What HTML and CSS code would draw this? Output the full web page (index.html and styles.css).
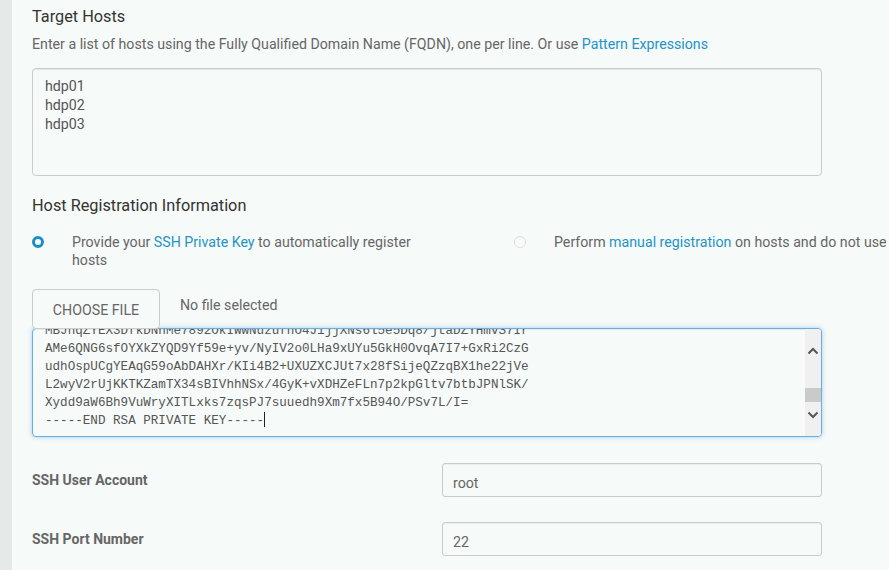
FILE: index.html
```html
<!DOCTYPE html>
<html>
<head>
<meta charset="utf-8">
<link rel="stylesheet" href="styles.css">
</head>
<body>
<div class="strip"></div>
<main class="main">
  <h2 class="title">Target Hosts</h2>
  <p class="desc">Enter a list of hosts using the Fully Qualified Domain Name (FQDN), one per line. Or use <a class="link">Pattern Expressions</a></p>
  <textarea class="hosts" readonly>hdp01
hdp02
hdp03</textarea>

  <h3 class="title title-reg">Host Registration Information</h3>
  <div class="radios">
    <div class="radio-opt">
      <span class="radio checked"></span>
      <span class="radio-text">Provide your <a class="link">SSH Private Key</a> to automatically register hosts</span>
    </div>
    <div class="radio-opt">
      <span class="radio"></span>
      <span class="radio-text nowrap">Perform <a class="link">manual registration</a> on hosts and do not use SSH</span>
    </div>
  </div>

  <div class="file-row">
    <button class="file-btn">CHOOSE FILE</button>
    <span class="file-none">No file selected</span>
  </div>

  <div class="keybox">
    <div class="keytext">
      <div class="keyinner">MBJnqZYEX3DfkDNhMe7892OkIWwNuzufhO4J1jjXNs6l5e5Dq8/jtaDZYHmvS7Ir
AMe6QNG6sfOYXkZYQD9Yf59e+yv/NyIV2o0LHa9xUYu5GkH0OvqA7I7+GxRi2CzG
udhOspUCgYEAqG59oAbDAHXr/KIi4B2+UXUZXCJUt7x28fSijeQZzqBX1he22jVe
L2wyV2rUjKKTKZamTX34sBIVhhNSx/4GyK+vXDHZeFLn7p2kpGltv7btbJPNlSK/
Xydd9aW6Bh9VuWryXITLxks7zqsPJ7suuedh9Xm7fx5B94O/PSv7L/I=
-----END RSA PRIVATE KEY-----<span class="caret"></span></div>
    </div>
    <div class="scrollbar">
      <svg class="chev" width="12" height="8" viewBox="0 0 12 8"><path d="M1.5 6.5 L6 2 L10.5 6.5" fill="none" stroke="#555" stroke-width="2"/></svg>
      <div class="thumb"></div>
      <svg class="chev chev-down" width="12" height="8" viewBox="0 0 12 8"><path d="M1.5 1.5 L6 6 L10.5 1.5" fill="none" stroke="#555" stroke-width="2"/></svg>
    </div>
  </div>

  <div class="form-row first">
    <label class="label">SSH User Account</label>
    <div class="input">root</div>
  </div>
  <div class="form-row">
    <label class="label">SSH Port Number</label>
    <div class="input">22</div>
  </div>
</main>
</body>
</html>
```

FILE: styles.css
```css
html, body {
  margin: 0;
  padding: 0;
  height: 100%;
  overflow: hidden;
}
body {
  display: flex;
  font-family: Roboto, "Liberation Sans", sans-serif;
  background: #f6faf8;
  color: #666;
}
.strip {
  width: 12px;
  flex: none;
  background: #e5e9e7;
}
.main {
  flex: 1;
  padding: 7px 0 0 20px;
  min-width: 0;
  overflow: hidden;
}
.title {
  margin: 0;
  font-size: 16.3px;
  line-height: 20px;
  font-weight: 400;
  color: #333;
}
.title-reg {
  margin-top: 20px;
}
.desc {
  margin: 7px 0 0;
  font-size: 14.2px;
  line-height: 20px;
  color: #666;
  white-space: nowrap;
}
.link {
  color: #2394c6;
  text-decoration: none;
}
.hosts {
  display: block;
  box-sizing: border-box;
  margin-top: 14px;
  width: 790px;
  height: 108px;
  padding: 8px 12px;
  border: 1px solid #ccc;
  border-radius: 4px;
  background: #f6faf8;
  box-shadow: inset 0 1px 1px rgba(0,0,0,.075);
  font-family: Roboto, "Liberation Sans", sans-serif;
  font-size: 14.2px;
  line-height: 19px;
  color: #555;
  resize: none;
  outline: none;
}
.radios {
  display: grid;
  grid-template-columns: 482px auto;
  margin-top: 17px;
}
.radio-opt {
  display: flex;
  align-items: flex-start;
  gap: 28px;
}
.radio {
  flex: none;
  box-sizing: border-box;
  width: 12px;
  height: 12px;
  margin-top: 3px;
  border-radius: 50%;
  border: 1px solid #ddd;
  background: #f9fbfa;
}
.radio.checked {
  border: 3.5px solid #1a8fc6;
  background: #fff;
}
.radio-text {
  width: 360px;
  font-size: 14.2px;
  line-height: 18px;
  color: #666;
}
.radio-text.nowrap {
  width: auto;
  white-space: nowrap;
}
.file-row {
  display: flex;
  align-items: center;
  gap: 20px;
  margin-top: 20px;
}
.file-btn {
  box-sizing: border-box;
  width: 128px;
  height: 40px;
  margin-bottom: -1px;
  padding: 2px 0 0;
  border: 1px solid #ccc;
  border-radius: 4px;
  background: #f6faf8;
  font-family: Roboto, "Liberation Sans", sans-serif;
  font-size: 14.2px;
  color: #666;
}
.file-none {
  font-size: 14.2px;
  color: #666;
  margin-top: -7px;
}
.keybox {
  display: flex;
  box-sizing: border-box;
  width: 790px;
  height: 109px;
  border: 1px solid #66afe9;
  border-radius: 4px;
  background: #f6faf8;
  box-shadow: inset 0 1px 1px rgba(0,0,0,.075), 0 0 4px rgba(102,175,233,.6);
  overflow: hidden;
}
.keytext {
  flex: 1;
  overflow: hidden;
  padding-left: 12px;
}
.keyinner {
  margin-top: -7px;
  white-space: pre;
  font-family: "Liberation Mono", "Courier New", monospace;
  font-size: 12.6px;
  line-height: 18px;
  color: #555;
}
.caret {
  display: inline-block;
  width: 0;
  height: 15px;
  border-left: 1px solid #222;
  vertical-align: -3px;
}
.scrollbar {
  flex: none;
  width: 16px;
  background: #f0f0f0;
  display: flex;
  flex-direction: column;
  align-items: center;
  padding-top: 18px;
  box-sizing: border-box;
}
.chev {
  display: block;
}
.thumb {
  width: 16px;
  height: 14px;
  margin-top: 33px;
  background: #c8cbc8;
}
.chev-down {
  margin-top: 9px;
}
.form-row {
  display: flex;
  align-items: center;
  margin-top: 25px;
}
.form-row.first {
  margin-top: 26px;
}
.label {
  width: 410px;
  font-size: 14px;
  font-weight: 700;
  color: #666;
}
.input {
  box-sizing: border-box;
  width: 380px;
  height: 34px;
  padding: 0 10px;
  border: 1px solid #ccc;
  border-radius: 3px;
  background: #f6faf8;
  box-shadow: inset 0 1px 1px rgba(0,0,0,.05);
  font-size: 14.2px;
  line-height: 38px;
  color: #666;
}
```
